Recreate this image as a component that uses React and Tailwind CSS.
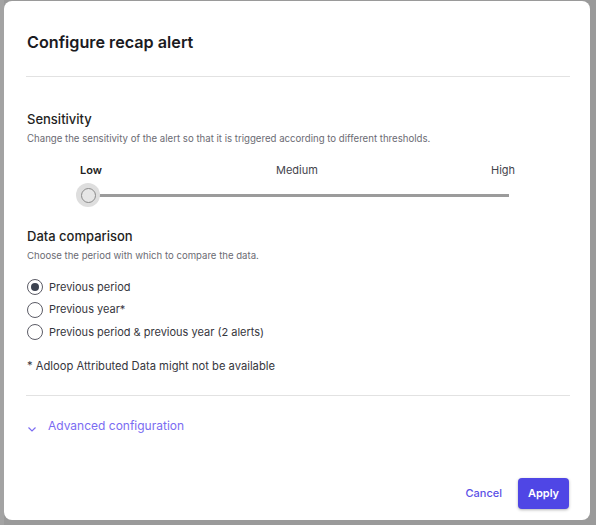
export default function App() {
  return (
    <div className="w-[596px] h-[525px] bg-[#9a9a9a] relative overflow-hidden" style={{ fontFamily: "Inter, sans-serif" }}>
      <div className="absolute left-0 top-0 w-[4px] h-full bg-[#a3a3a3]"></div>
      <div className="absolute left-[4px] top-[1px] w-[586px] h-[519px] bg-white rounded-[8px] flex flex-col pl-[22px] pr-[20px]">
        <div className="h-[76px] flex items-center border-b border-[#e2e2e2]">
          <h1 className="text-[16.2px] font-semibold text-[#1b1b1f] pt-[8px] pl-[1px]">Configure recap alert</h1>
        </div>
        <div className="pt-[33px] pl-[1px]">
          <h2 className="text-[13px] font-medium text-[#1f1f23] leading-[18px]">Sensitivity</h2>
          <p className="text-[9.65px] text-[#6b6b73] mt-[4px] leading-[14px]">Change the sensitivity of the alert so that it is triggered according to different thresholds.</p>
          <div className="relative h-[66px] mt-[12px]">
            <span className="absolute left-[53px] top-[4px] text-[11px] font-semibold text-[#1f1f23]">Low</span>
            <span className="absolute left-[249px] top-[4px] text-[11px] text-[#44444c]">Medium</span>
            <span className="absolute left-[464px] top-[4px] text-[11px] text-[#44444c]">High</span>
            <div className="absolute left-[61px] top-[36px] w-[421px] h-[3px] bg-[#9b9b9b]"></div>
            <div className="absolute left-[49px] top-[25px] w-[24px] h-[24px] rounded-full bg-[#dedede] flex items-center justify-center">
              <div className="w-[15px] h-[15px] rounded-full border-[1.5px] border-[#8a8a8a] bg-[#e6e6e6]"></div>
            </div>
          </div>
          <h2 className="text-[13px] font-medium text-[#1f1f23] leading-[18px] mt-[3px]">Data comparison</h2>
          <p className="text-[9.6px] text-[#6b6b73] mt-[4px] leading-[14px]">Choose the period with which to compare the data.</p>
          <div className="mt-[16px] flex flex-col gap-[6.5px]">
            {[
              ["Previous period", true],
              ["Previous year*", false],
              ["Previous period & previous year (2 alerts)", false],
            ].map(([label, checked]) => (
              <div key={label} className="flex items-center h-[16px]">
                <div className="w-[16px] h-[16px] rounded-full border-[1.2px] border-[#5c5c66] flex items-center justify-center">
                  {checked && <div className="w-[8px] h-[8px] rounded-full bg-[#3c4250]"></div>}
                </div>
                <span className="ml-[6px] text-[11px] text-[#36363d]">{label}</span>
              </div>
            ))}
          </div>
          <p className="text-[11.2px] text-[#36363d] mt-[18px]">* Adloop Attributed Data might not be available</p>
          <div className="border-b border-[#e2e2e2] mt-[20px] ml-[-1px]"></div>
          <div className="flex items-center mt-[21px] h-[18px]">
            <svg width="12" height="12" viewBox="0 0 12 12" className="mt-[6px] ml-[-1px]">
              <path d="M2.5 4.5 L6 8 L9.5 4.5" fill="none" stroke="#7b6cf2" strokeWidth="1.2" />
            </svg>
            <span className="ml-[10px] text-[12px] text-[#7b6cf2]">Advanced configuration</span>
          </div>
        </div>
        <div className="flex-1"></div>
        <div className="flex justify-end items-center gap-[16px] pb-[11px] pr-[1px]">
          <span className="text-[11px] font-medium text-[#5b4fe6]">Cancel</span>
          <button className="w-[51px] h-[31px] rounded-[4px] bg-[#4f46e5] text-white text-[11px] font-semibold shadow-[0_1px_3px_rgba(0,0,0,0.3)]">Apply</button>
        </div>
      </div>
    </div>
  );
}
